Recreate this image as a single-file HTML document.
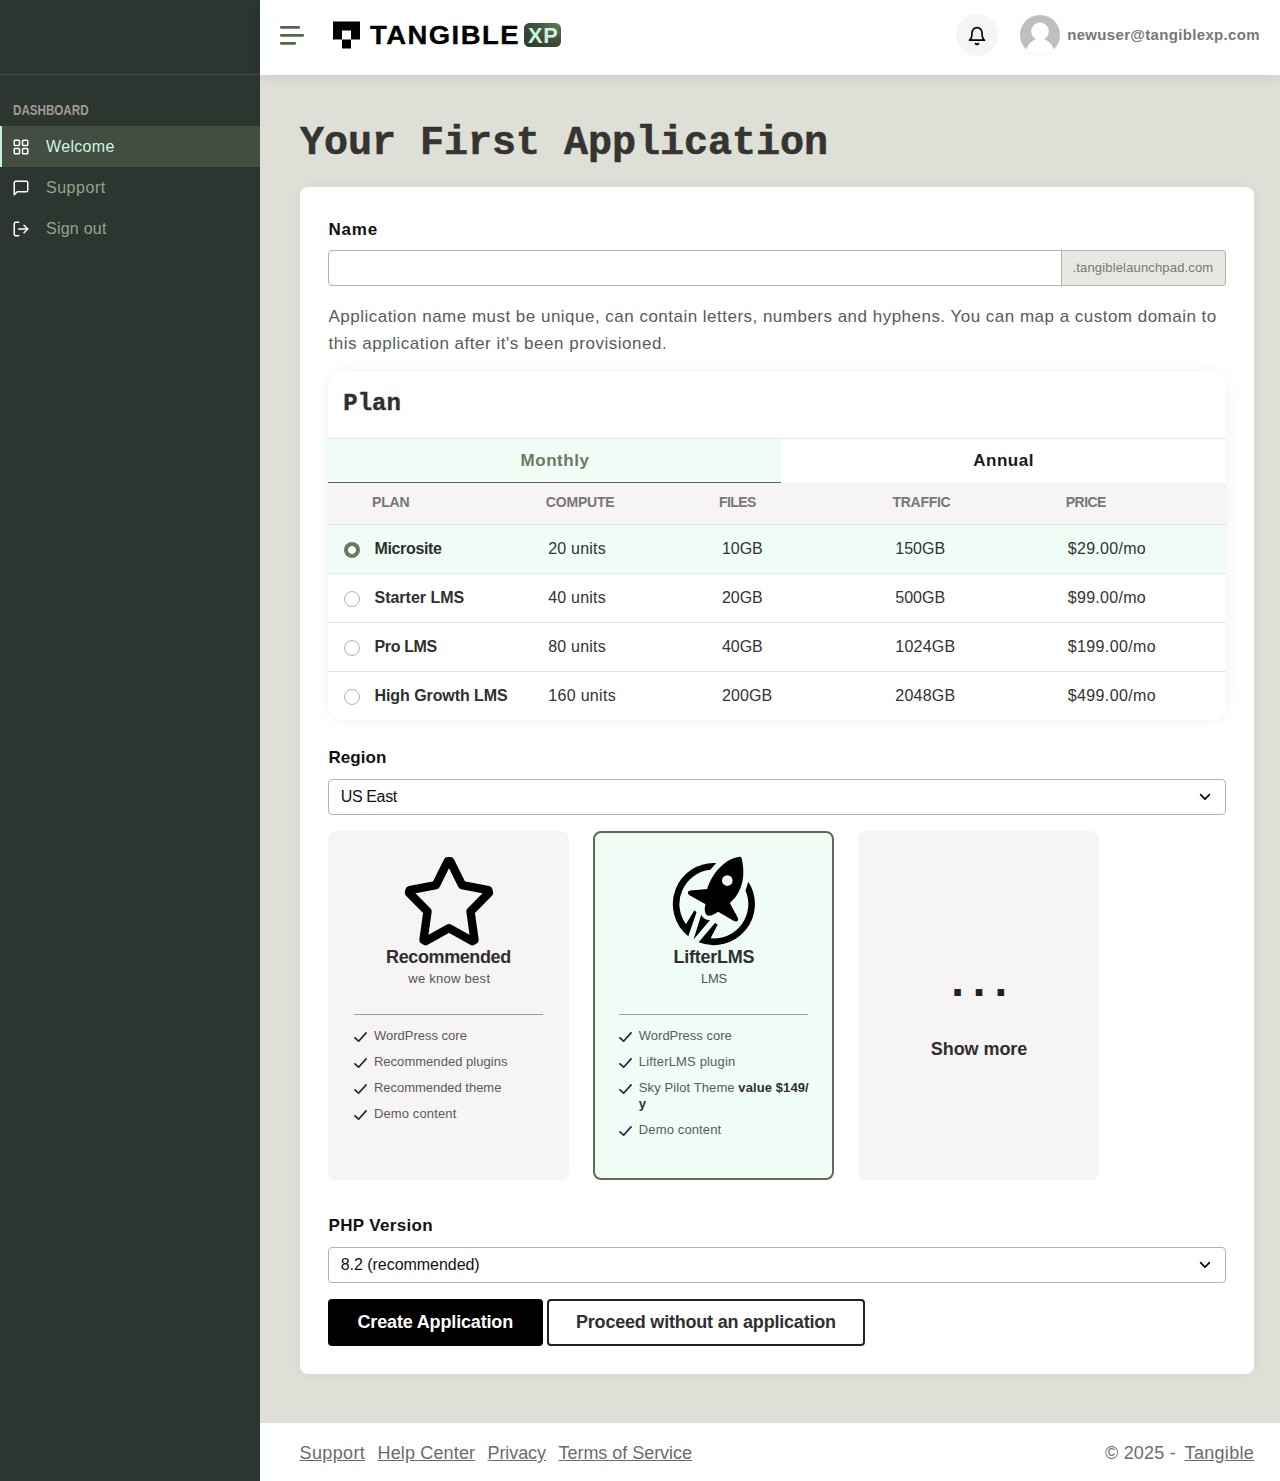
<!DOCTYPE html>
<html lang="en">
<head>
<meta charset="utf-8">
<title>Your First Application</title>
<style>
*{box-sizing:border-box;margin:0;padding:0}
html,body{width:1280px;height:1481px;overflow:hidden}
body{font-family:"Liberation Sans",sans-serif;background:#dedfd7;color:#2f2f2f;position:relative}
.abs{position:absolute}
.t{position:absolute;white-space:nowrap}
.t b{color:#2f2f2f}
.m{font-family:"Liberation Mono",monospace}
/* sidebar */
#side{position:absolute;left:0;top:0;width:260px;height:1481px;background:#2c3530}
#side .top{position:absolute;left:0;top:0;width:260px;height:75px;border-bottom:1px solid #475042}
#side .lbl{position:absolute;left:12.500px;top:100px;font-size:14px;font-weight:bold;color:#a39a94;line-height:20px;transform:scaleX(.83);transform-origin:0 50%;white-space:nowrap}
.nav{position:absolute;left:0;width:260px;height:41px}
.nav svg{position:absolute;left:12px;top:12px;width:18px;height:18px;stroke:#fff;fill:none;stroke-width:2;stroke-linecap:round;stroke-linejoin:round}
.nav.act{background:#434d41;border-left:2px solid #c5f3da}
.nav.act svg{left:10px}
/* header */
#hdr{position:absolute;left:260px;top:0;width:1020px;height:75px;background:#fff;box-shadow:0 2px 12px rgba(0,0,0,.09)}
.logo{position:absolute;left:109.800px;top:17px;font-size:25px;line-height:36px;font-weight:bold;color:#000;letter-spacing:1.300px;white-space:nowrap;-webkit-text-stroke:.3px #000;transform:scaleX(1.1);transform-origin:0 50%}
.xp{position:absolute;left:264px;top:23px;width:37px;height:24px;border-radius:5.500px;background:radial-gradient(ellipse at 95% 5%,#627856 0%,#43523f 45%,#2c3530 100%);color:#c8f5dc;font-weight:bold;font-size:22.500px;line-height:25px;text-align:center}
.xp span{display:inline-block;transform:scaleX(.97);letter-spacing:.6px;padding-left:1.600px}
.bell{position:absolute;left:696px;top:14px;width:42px;height:42px;border-radius:50%;background:#f6f4f4}
.bell svg{position:absolute;left:11px;top:12.200px;fill:none;stroke:#000;stroke-width:2;stroke-linecap:round;stroke-linejoin:round}
/* title */
h1{position:absolute;left:300px;top:118px;font-family:"Liberation Mono",monospace;font-weight:bold;font-size:40px;line-height:52px;color:#363432;white-space:nowrap;-webkit-text-stroke:.6px #363432}
#card{position:absolute;left:300px;top:187px;width:954px;height:1187px;background:#fff;border-radius:8px;box-shadow:0 0 12px rgba(0,0,0,.045)}
#foot{position:absolute;left:260px;top:1423px;width:1020px;height:58px;background:#fff}
.inp{position:absolute;border:1px solid #b8b1aa;border-radius:4px;background:#fff}
.chev{position:absolute;fill:none;stroke:#000;stroke-width:1.600;stroke-linecap:round;stroke-linejoin:round}
#plan{position:absolute;left:328px;top:373px;width:898px;height:347px;border-radius:16px;background:#fff;box-shadow:0 0 16px rgba(0,0,0,.06);overflow:hidden}
#plan>div{position:absolute}
.rad{position:absolute;width:16px;height:16px;border-radius:50%;border:1px solid #b8b1aa;background:#fff}
.rad.on{border:none;background:radial-gradient(circle at center,#fff 0,#fff 3.500px,#6b7a62 4.300px)}
.opt{position:absolute;border-radius:8px;background:#f6f4f4}
.opt.sel{background:#effdf6;border:2px solid #5d6b55}
.hr{position:absolute;height:1px;background:#a29c95}
.ck{position:absolute;width:13px;height:10px;fill:none;stroke:#1f2937;stroke-width:1.700;stroke-linecap:round;stroke-linejoin:round;overflow:visible}
.btn{position:absolute;border-radius:4px}

a{text-decoration:none;color:inherit}
h2,h3,label,p,b.t{margin:0;font-weight:normal}
h2.t,h3.t,label.t,b.t{font-weight:bold}
h2.m{-webkit-text-stroke:.4px #2f2f2f}
ul,li{list-style:none}
button{font:inherit;cursor:pointer;padding:0}
.suffix{position:absolute;background:#e8e8e3;border:1px solid #b8b1aa;border-radius:0 4px 4px 0}
input.inp{outline:0;font:inherit;padding:0 12px}
.tab{position:absolute}
.tab.on{background:#effdf6;border-bottom:1px solid #56664f}
.thead{position:absolute;background:#f6f4f4}
.row{position:absolute;border-bottom:1px solid #e3e3e0}
.row.sel{background:#effdf6;border-top:1px solid #e3e3e0}
.row.last{border-bottom:0}
svg.abs,svg.ck,svg.chev{position:absolute}
</style>
</head>
<body>
<nav id="side" style="left:0px;top:0px;width:260px;height:1481px;">
  <div class="top"></div>
  <div class="lbl">DASHBOARD</div>
  <a class="nav act" href="#" style="left:0px;top:126px;width:260px;height:41px;">
    <svg viewBox="0 0 24 24"><rect x="3" y="3" width="7" height="7" rx="1"/><rect x="14" y="3" width="7" height="7" rx="1"/><rect x="3" y="14" width="7" height="7" rx="1"/><rect x="14" y="14" width="7" height="7" rx="1"/></svg>
    <span class="t" style="left:44px;top:10px;font-size:16px;line-height:21px;color:#cdf7e0;letter-spacing:0.335px;">Welcome</span>
  </a>
  <a class="nav" href="#" style="left:0px;top:167px;width:260px;height:41px;">
    <svg viewBox="0 0 24 24"><path d="M21 15a2 2 0 0 1-2 2H7l-4 4V5a2 2 0 0 1 2-2h14a2 2 0 0 1 2 2z"/></svg>
    <span class="t" style="left:46px;top:10px;font-size:16px;line-height:21px;color:#8fa78c;letter-spacing:0.526px;">Support</span>
  </a>
  <a class="nav" href="#" style="left:0px;top:208px;width:260px;height:41px;">
    <svg viewBox="0 0 24 24"><path d="M9 21H5a2 2 0 0 1-2-2V5a2 2 0 0 1 2-2h4"/><path d="M16 17l5-5-5-5"/><path d="M21 12H9"/></svg>
    <span class="t" style="left:46px;top:10px;font-size:16px;line-height:21px;color:#8fa78c;letter-spacing:0.24px;">Sign out</span>
  </a>
</nav>
<header id="hdr" style="left:260px;top:0px;width:1020px;height:75px;">
  <svg class="abs" style="left:20px;top:24px" width="28" height="22" viewBox="0 0 28 22"><g fill="#56664f"><rect x="0" y="2.100" width="20" height="2.600" rx="1"/><rect x="0" y="10.100" width="24" height="2.600" rx="1"/><rect x="0" y="18.100" width="16" height="2.600" rx="1"/></g></svg>
  <svg class="abs" style="left:73px;top:21px" width="27" height="28" viewBox="0 0 27 28"><path d="M0 .5h27v18h-9v-9h-9v9h-9z M9 18.500h9v9h-9z" fill="#000"/></svg>
  <div class="logo">TANGIBLE</div>
  <div class="xp"><span>XP</span></div>
  <div class="bell"><svg viewBox="0 0 24 24" width="20" height="20"><path d="M18 8A6 6 0 0 0 6 8c0 7-3 9-3 9h18s-3-2-3-9"/><path d="M13.730 21a2 2 0 0 1-3.460 0"/></svg></div>
  <svg class="abs" style="left:760px;top:15px" width="40" height="40" viewBox="0 0 40 40"><defs><clipPath id="avc"><circle cx="20" cy="20" r="20"/></clipPath></defs><circle cx="20" cy="20" r="20" fill="#bfbfbf"/><g clip-path="url(#avc)" fill="#fff"><circle cx="20" cy="16.300" r="8.800"/><ellipse cx="20" cy="41" rx="15" ry="17.500"/></g></svg>
  <span class="t" style="left:807.2px;top:25px;font-size:15px;line-height:20px;color:#777;font-weight:bold;letter-spacing:0.328px;">newuser@tangiblexp.com</span>
</header>
<h1>Your First Application</h1>
<main id="card" style="left:300px;top:187px;width:954px;height:1187px;">
  <label class="t" style="left:28.5px;top:32px;font-size:17px;line-height:22px;color:#111;font-weight:bold;letter-spacing:0.796px;">Name</label>
  <input class="inp" type="text" aria-label="Name" style="left:28px;top:63px;width:898px;height:36px;">
  <div class="suffix" style="left:761px;top:63px;width:165px;height:36px;">
    <span class="t" style="left:10.5px;top:8px;font-size:13px;line-height:17px;color:#777;letter-spacing:0.161px;">.tangiblelaunchpad.com</span>
  </div>
  <p class="t" style="left:28.5px;top:119px;font-size:17px;line-height:22px;color:#5a5a5a;letter-spacing:0.485px;">Application name must be unique, can contain letters, numbers and hyphens. You can map a custom domain to</p>
  <p class="t" style="left:28.5px;top:146px;font-size:17px;line-height:22px;color:#5a5a5a;letter-spacing:0.525px;">this application after it's been provisioned.</p>
  <section id="plan" style="left:28px;top:185px;width:898px;height:348px;">
    <h2 class="t m" style="left:15.3px;top:16px;font-size:24px;line-height:31px;color:#2f2f2f;font-weight:bold;">Plan</h2>
    <div style="left:0px;top:66px;width:898px;height:1px;background:#e6e6e4"></div>
    <div class="tab on" style="left:0px;top:67px;width:453px;height:44px;">
      <span class="t" style="left:192.5px;top:11px;font-size:17px;line-height:22px;color:#6b7a62;font-weight:bold;letter-spacing:0.549px;">Monthly</span>
    </div>
    <div class="tab" style="left:453px;top:67px;width:445px;height:44px;">
      <span class="t" style="left:192.25px;top:11px;font-size:17px;line-height:22px;color:#1a1a1a;font-weight:bold;letter-spacing:0.518px;">Annual</span>
    </div>
    <div class="thead" style="left:0px;top:111px;width:898px;height:41px;">
      <span class="t" style="left:44px;top:10px;font-size:14px;line-height:18px;color:#777;font-weight:bold;letter-spacing:-0.142px;">PLAN</span>
      <span class="t" style="left:217.75px;top:10px;font-size:14px;line-height:18px;color:#777;font-weight:bold;letter-spacing:-0.175px;">COMPUTE</span>
      <span class="t" style="left:391px;top:10px;font-size:14px;line-height:18px;color:#777;font-weight:bold;letter-spacing:-0.555px;">FILES</span>
      <span class="t" style="left:564.5px;top:10px;font-size:14px;line-height:18px;color:#777;font-weight:bold;letter-spacing:-0.282px;">TRAFFIC</span>
      <span class="t" style="left:737.75px;top:10px;font-size:14px;line-height:18px;color:#777;font-weight:bold;letter-spacing:-0.524px;">PRICE</span>
    </div>
    <div class="row sel" style="left:0px;top:152px;width:898px;height:50px;">
      <span class="rad on" style="left:16px;top:17px;"></span>
      <span class="t" style="left:46.5px;top:13px;font-size:16px;line-height:21px;color:#2f2f2f;font-weight:bold;letter-spacing:-0.35px;">Microsite</span>
      <span class="t" style="left:220.25px;top:13px;font-size:16px;line-height:21px;color:#333;letter-spacing:0.2px;">20 units</span>
      <span class="t" style="left:394px;top:13px;font-size:16px;line-height:21px;color:#333;letter-spacing:-0.074px;">10GB</span>
      <span class="t" style="left:567.25px;top:13px;font-size:16px;line-height:21px;color:#333;letter-spacing:0.034px;">150GB</span>
      <span class="t" style="left:739.75px;top:13px;font-size:16px;line-height:21px;color:#333;letter-spacing:0.293px;">$29.00/mo</span>
    </div>
    <div class="row" style="left:0px;top:202px;width:898px;height:49px;">
      <span class="rad" style="left:16px;top:17px;"></span>
      <span class="t" style="left:46.5px;top:13px;font-size:16px;line-height:21px;color:#2f2f2f;font-weight:bold;letter-spacing:-0.01px;">Starter LMS</span>
      <span class="t" style="left:220.25px;top:13px;font-size:16px;line-height:21px;color:#333;letter-spacing:0.2px;">40 units</span>
      <span class="t" style="left:394px;top:13px;font-size:16px;line-height:21px;color:#333;letter-spacing:-0.074px;">20GB</span>
      <span class="t" style="left:567.25px;top:13px;font-size:16px;line-height:21px;color:#333;letter-spacing:0.034px;">500GB</span>
      <span class="t" style="left:739.75px;top:13px;font-size:16px;line-height:21px;color:#333;letter-spacing:0.293px;">$99.00/mo</span>
    </div>
    <div class="row" style="left:0px;top:251px;width:898px;height:49px;">
      <span class="rad" style="left:16px;top:17px;"></span>
      <span class="t" style="left:46.5px;top:13px;font-size:16px;line-height:21px;color:#2f2f2f;font-weight:bold;letter-spacing:-0.365px;">Pro LMS</span>
      <span class="t" style="left:220.25px;top:13px;font-size:16px;line-height:21px;color:#333;letter-spacing:0.2px;">80 units</span>
      <span class="t" style="left:394px;top:13px;font-size:16px;line-height:21px;color:#333;letter-spacing:-0.074px;">40GB</span>
      <span class="t" style="left:567.25px;top:13px;font-size:16px;line-height:21px;color:#333;letter-spacing:0.246px;">1024GB</span>
      <span class="t" style="left:739.75px;top:13px;font-size:16px;line-height:21px;color:#333;letter-spacing:0.382px;">$199.00/mo</span>
    </div>
    <div class="row last" style="left:0px;top:300px;width:898px;height:48px;">
      <span class="rad" style="left:16px;top:17px;"></span>
      <span class="t" style="left:46.5px;top:13px;font-size:16px;line-height:21px;color:#2f2f2f;font-weight:bold;letter-spacing:-0.072px;">High Growth LMS</span>
      <span class="t" style="left:220.25px;top:13px;font-size:16px;line-height:21px;color:#333;letter-spacing:0.314px;">160 units</span>
      <span class="t" style="left:394px;top:13px;font-size:16px;line-height:21px;color:#333;letter-spacing:0.097px;">200GB</span>
      <span class="t" style="left:567.25px;top:13px;font-size:16px;line-height:21px;color:#333;letter-spacing:0.246px;">2048GB</span>
      <span class="t" style="left:739.75px;top:13px;font-size:16px;line-height:21px;color:#333;letter-spacing:0.382px;">$499.00/mo</span>
    </div>
  </section>
  <label class="t" style="left:28.5px;top:560px;font-size:17px;line-height:22px;color:#111;font-weight:bold;letter-spacing:0.068px;">Region</label>
  <div class="inp" role="combobox" style="left:28px;top:592px;width:898px;height:36px;">
    <span class="t" style="left:11.75px;top:6px;font-size:16px;line-height:21px;color:#111;letter-spacing:-0.373px;">US East</span>
    <svg class="chev" width="12" height="8" viewBox="0 0 12 8" style="left:870px;top:13px;"><path d="M1.600 1.600L6 6.100L10.400 1.600"/></svg>
  </div>
  <div class="opt" style="left:28px;top:644px;width:241px;height:349px;">
    <svg class="abs" width="100" height="100" viewBox="0 0 100 100" fill="none" stroke="#000" stroke-width="8.400" stroke-linecap="round" stroke-linejoin="round" style="left:71px;top:20px;"><polygon points="48.700,10.300 51.300,10.300 63.100,34.200 89.300,39.100 90,41.700 71.500,60.500 75.500,88.900 73.300,90.200 50,77.200 26.700,90.200 24.500,88.900 28.500,60.500 10,41.700 10.700,39.100 36.900,34.200"/></svg>
    <h3 class="t" style="left:58.1px;top:115px;font-size:18px;line-height:23px;color:#2f2f2f;font-weight:bold;letter-spacing:-0.395px;">Recommended</h3>
    <span class="t" style="left:80.3px;top:139px;font-size:13px;line-height:17px;color:#555;letter-spacing:0.267px;">we know best</span>
    <div class="hr" style="left:26px;top:183px;width:189px;height:1px;"></div>
    <ul>
      <li>
        <svg class="ck" width="13" height="10" viewBox="0 0 13 10" style="left:26px;top:200.5px;"><path d="M.9 5.800L4.600 9.200L12.100 .9"/></svg>
        <span class="t" style="left:45.9px;top:196px;font-size:13px;line-height:17px;color:#5a5a5a;letter-spacing:0.002px;">WordPress core</span>
      </li>
      <li>
        <svg class="ck" width="13" height="10" viewBox="0 0 13 10" style="left:26px;top:226.5px;"><path d="M.9 5.800L4.600 9.200L12.100 .9"/></svg>
        <span class="t" style="left:45.9px;top:222px;font-size:13px;line-height:17px;color:#5a5a5a;letter-spacing:0.035px;">Recommended plugins</span>
      </li>
      <li>
        <svg class="ck" width="13" height="10" viewBox="0 0 13 10" style="left:26px;top:252.5px;"><path d="M.9 5.800L4.600 9.200L12.100 .9"/></svg>
        <span class="t" style="left:45.9px;top:248px;font-size:13px;line-height:17px;color:#5a5a5a;letter-spacing:-0.025px;">Recommended theme</span>
      </li>
      <li>
        <svg class="ck" width="13" height="10" viewBox="0 0 13 10" style="left:26px;top:278.5px;"><path d="M.9 5.800L4.600 9.200L12.100 .9"/></svg>
        <span class="t" style="left:45.9px;top:274px;font-size:13px;line-height:17px;color:#5a5a5a;letter-spacing:0.133px;">Demo content</span>
      </li>
    </ul>
  </div>
  <div class="opt sel" style="left:293px;top:644px;width:241px;height:349px;">
    <svg class="abs" width="100" height="100" viewBox="0 0 100 100" fill="#000" style="left:70px;top:17px;"><path fill-rule="evenodd" d="M74 7C76 6.300 76.800 8 77.200 11C79 20 79 30 75 39.100C73 44.500 69 49.500 64.800 53.100L72.800 67.800Q74 70.500 71.800 71.300Q70.500 71.800 69 71L53.100 61.700C50 64 47 65.500 43.500 65.800C40.500 65.500 39.500 61 39.800 57.800C39.900 56.500 40.200 55.300 40.600 54.300L24.500 45.300Q22.300 44 23 42Q23.500 40.600 25.500 40.500L42.200 39.100C45 29 52 18 62 11.500C66 9 70 7.600 74 7Z M67.600 30.600A5.300 5.300 0 1 0 57 30.600A5.300 5.300 0 1 0 67.600 30.600Z"/><path d="M51.210 13.070A41.050 41.050 0 0 0 23.300 86.180L31.600 62.100L29.300 60.500L20.940 74.250A34.450 34.450 0 0 1 45.310 19.780Z"/><path d="M83.320 31.750A41.050 41.050 0 0 1 33.670 92.190L50 73L52.700 74.600L45.610 88.350A34.450 34.450 0 0 0 80.510 40.480Z"/><path d="M28.500 89.500L36.300 64.800Q38.500 69.800 44.900 70.300Z"/></svg>
    <h3 class="t" style="left:78.4px;top:113px;font-size:18px;line-height:23px;color:#2f2f2f;font-weight:bold;letter-spacing:-0.225px;">LifterLMS</h3>
    <span class="t" style="left:106.1px;top:137px;font-size:13px;line-height:17px;color:#555;letter-spacing:-0.317px;">LMS</span>
    <div class="hr" style="left:24px;top:181px;width:189px;height:1px;"></div>
    <ul>
      <li>
        <svg class="ck" width="13" height="10" viewBox="0 0 13 10" style="left:24px;top:198.5px;"><path d="M.9 5.800L4.600 9.200L12.100 .9"/></svg>
        <span class="t" style="left:43.8px;top:194px;font-size:13px;line-height:17px;color:#5a5a5a;letter-spacing:-0.005px;">WordPress core</span>
      </li>
      <li>
        <svg class="ck" width="13" height="10" viewBox="0 0 13 10" style="left:24px;top:224.5px;"><path d="M.9 5.800L4.600 9.200L12.100 .9"/></svg>
        <span class="t" style="left:43.8px;top:220px;font-size:13px;line-height:17px;color:#5a5a5a;letter-spacing:0.163px;">LifterLMS plugin</span>
      </li>
      <li>
        <svg class="ck" width="13" height="10" viewBox="0 0 13 10" style="left:24px;top:250.5px;"><path d="M.9 5.800L4.600 9.200L12.100 .9"/></svg>
        <span class="t" style="left:43.8px;top:246px;font-size:13px;line-height:17px;color:#5a5a5a;letter-spacing:0.095px;">Sky Pilot Theme <b>value $149/</b></span>
        <b class="t" style="left:43.8px;top:262px;font-size:13px;line-height:17px;color:#2f2f2f;font-weight:bold;">y</b>
      </li>
      <li>
        <svg class="ck" width="13" height="10" viewBox="0 0 13 10" style="left:24px;top:292.5px;"><path d="M.9 5.800L4.600 9.200L12.100 .9"/></svg>
        <span class="t" style="left:43.8px;top:288px;font-size:13px;line-height:17px;color:#5a5a5a;letter-spacing:0.133px;">Demo content</span>
      </li>
    </ul>
  </div>
  <div class="opt" style="left:558px;top:644px;width:241px;height:349px;">
    <span class="t m" style="left:85.65px;top:123px;font-size:46px;line-height:60px;color:#222;font-weight:bold;letter-spacing:-5.95px;">...</span>
    <h3 class="t" style="left:72.75px;top:207px;font-size:18px;line-height:23px;color:#2f2f2f;font-weight:bold;letter-spacing:-0.058px;">Show more</h3>
  </div>
  <label class="t" style="left:28.5px;top:1028px;font-size:17px;line-height:22px;color:#111;font-weight:bold;letter-spacing:0.34px;">PHP Version</label>
  <div class="inp" role="combobox" style="left:28px;top:1060px;width:898px;height:36px;">
    <span class="t" style="left:11.75px;top:6px;font-size:16px;line-height:21px;color:#111;letter-spacing:-0.042px;">8.2 (recommended)</span>
    <svg class="chev" width="12" height="8" viewBox="0 0 12 8" style="left:870px;top:13px;"><path d="M1.600 1.600L6 6.100L10.400 1.600"/></svg>
  </div>
  <button class="btn" type="button" style="left:28px;top:1112px;width:215px;height:47px;background:#000;border:0">
    <span class="t" style="left:29.5px;top:12px;font-size:18px;line-height:23px;color:#fff;font-weight:bold;letter-spacing:-0.157px;">Create Application</span>
  </button>
  <button class="btn" type="button" style="left:247px;top:1112px;width:318px;height:47px;background:#fff;border:2px solid #222">
    <span class="t" style="left:27px;top:10px;font-size:18px;line-height:23px;color:#2f2f2f;font-weight:bold;letter-spacing:-0.208px;">Proceed without an application</span>
  </button>
</main>
<footer id="foot" style="left:260px;top:1423px;width:1020px;height:58px;">
  <a class="t" href="#" style="left:39.5px;top:19px;font-size:18px;line-height:23px;color:#6b6b6b;letter-spacing:0.379px;text-decoration:underline;">Support</a>
  <a class="t" href="#" style="left:117.5px;top:19px;font-size:18px;line-height:23px;color:#6b6b6b;letter-spacing:0.15px;text-decoration:underline;">Help Center</a>
  <a class="t" href="#" style="left:227.5px;top:19px;font-size:18px;line-height:23px;color:#6b6b6b;letter-spacing:-0.088px;text-decoration:underline;">Privacy</a>
  <a class="t" href="#" style="left:298.5px;top:19px;font-size:18px;line-height:23px;color:#6b6b6b;letter-spacing:-0.034px;text-decoration:underline;">Terms of Service</a>
  <span class="t" style="left:845px;top:19px;font-size:18px;line-height:23px;color:#6b6b6b;letter-spacing:0.198px;">© 2025 -</span>
  <a class="t" href="#" style="left:924.6px;top:19px;font-size:18px;line-height:23px;color:#6b6b6b;letter-spacing:0.305px;text-decoration:underline;">Tangible</a>
</footer>
</body>
</html>
